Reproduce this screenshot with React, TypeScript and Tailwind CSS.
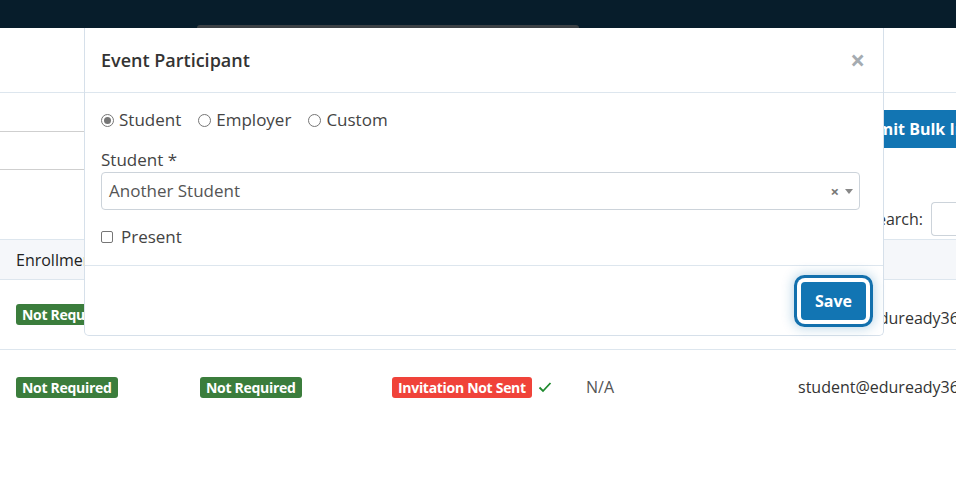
import React from 'react';

const font = { fontFamily: '"Open Sans", "Liberation Sans", sans-serif' };

const Badge: React.FC<{ tone: 'green' | 'red'; children: React.ReactNode }> = ({ tone, children }) => (
  <span
    className={`inline-flex h-[21px] items-center rounded-[3px] px-[6px] text-[14px] font-bold tracking-[-0.3px] text-white ${
      tone === 'green' ? 'bg-[#3b7d3c]' : 'bg-[#f0433a]'
    }`}
  >
    {children}
  </span>
);

const Radio: React.FC<{ checked?: boolean; label: string }> = ({ checked, label }) => (
  <label className="flex items-center gap-[5px]">
    <span className="flex h-[13px] w-[13px] items-center justify-center rounded-full border border-[#767676] bg-white">
      {checked && <span className="h-[7px] w-[7px] rounded-full bg-[#767676]" />}
    </span>
    <span>{label}</span>
  </label>
);

export default function App() {
  return (
    <div className="relative h-[478px] w-[956px] overflow-hidden bg-white text-[#333]" style={font}>
      {/* top navigation */}
      <div className="h-[28px] bg-[#071d2b] pt-[25px]">
        <div className="ml-[197px] h-[3px] w-[382px] rounded-t-[3px] bg-[#3c4145]" />
      </div>

      {/* page heading strip */}
      <div className="h-[65px] border-b border-[#dde6ee]" />

      {/* toolbar */}
      <div className="flex h-[146px] justify-between">
        <div className="w-[200px]">
          <div className="h-[39px] border-b border-[#cfcfcf]" />
          <div className="h-[38px] border-b border-[#cfcfcf]" />
        </div>
        <div className="flex flex-col items-end">
          <div className="mt-[17px] flex h-[38px] w-[112px] items-center whitespace-nowrap bg-[#1275b3] pl-[4px] text-[16px] font-bold text-white">
            Submit Bulk Invite
          </div>
          <div className="mt-[54px] flex items-center gap-[8px]">
            <span className="text-[16px] text-[#333]">Search:</span>
            <div className="h-[34px] w-[25px] rounded-l-[4px] border border-r-0 border-[#ccd3da] bg-white" />
          </div>
        </div>
      </div>

      {/* table */}
      <div>
        <div className="flex h-[41px] items-center border-y border-[#dde6ee] bg-[#f5f7fa] pl-[16px] text-[16px] font-medium text-[#222]">
          Enrollment Status
        </div>
        <div className="relative flex h-[70px] items-center border-b border-[#dde6ee] pl-[16px] text-[16px]">
          <Badge tone="green">Not Required</Badge>
          <span className="absolute left-[798px] top-[26px] whitespace-nowrap text-[#333]">student@eduready360.com</span>
        </div>
        <div className="flex h-[74px] items-center whitespace-nowrap text-[16px] text-[#333]">
          <div className="w-[200px] shrink-0 pl-[16px]">
            <Badge tone="green">Not Required</Badge>
          </div>
          <div className="w-[192px] shrink-0">
            <Badge tone="green">Not Required</Badge>
          </div>
          <div className="flex w-[194px] shrink-0 items-center gap-[6px]">
            <Badge tone="red">Invitation Not Sent</Badge>
            <svg width="14" height="12" viewBox="0 0 14 12" fill="none">
              <path d="M1.5 6.5l3.5 3.5 7.5-8" stroke="#1e8a2e" strokeWidth="1.8" />
            </svg>
          </div>
          <div className="w-[212px] shrink-0 text-[#555]">N/A</div>
          <div className="shrink-0">student@eduready360.com</div>
        </div>
      </div>

      {/* modal */}
      <div className="absolute left-[84px] top-[28px] w-[800px] rounded-b-[5px] border border-t-0 border-[#d6e0ea] bg-white">
        <div className="flex h-[65px] items-center justify-between border-b border-[#dde6ee] pl-[16px] pr-[18px]">
          <h5 className="text-[18px] font-semibold text-[#333]">Event Participant</h5>
          <span className="text-[26px] font-bold leading-none text-[#a5abb1]">×</span>
        </div>

        <div className="h-[172px] px-[16px] pt-[15px] text-[17px] leading-[24px] text-[#444]">
          <div className="flex items-center gap-[17px]">
            <Radio checked label="Student" />
            <Radio label="Employer" />
            <Radio label="Custom" />
          </div>
          <div className="mt-[16px]">Student *</div>
          <div className="mr-[7px] flex h-[38px] items-center justify-between rounded-[4px] border border-[#ccd3da] pl-[7px] pr-[6px] text-[#555]">
            <span>Another Student</span>
            <span className="flex items-center gap-[6px] text-[#777]">
              <span className="text-[15px] font-bold leading-none">×</span>
              <svg width="8" height="5" viewBox="0 0 8 5">
                <path d="M0 0h8L4 5z" fill="#888" />
              </svg>
            </span>
          </div>
          <label className="mt-[15px] flex items-center gap-[8px]">
            <span className="h-[12px] w-[12px] rounded-[2px] border border-[#767676]" />
            <span>Present</span>
          </label>
        </div>

        <div className="flex h-[70px] items-center justify-end border-t border-[#dde6ee] pr-[17px]">
          <button className="h-[38px] w-[65px] rounded-[4px] bg-[#1275b3] text-[16px] font-bold text-white shadow-[0_0_0_4px_#fff,0_0_0_7px_#1270ad,0_0_12px_8px_rgba(18,112,173,0.3)]">
            Save
          </button>
        </div>
      </div>
    </div>
  );
}
